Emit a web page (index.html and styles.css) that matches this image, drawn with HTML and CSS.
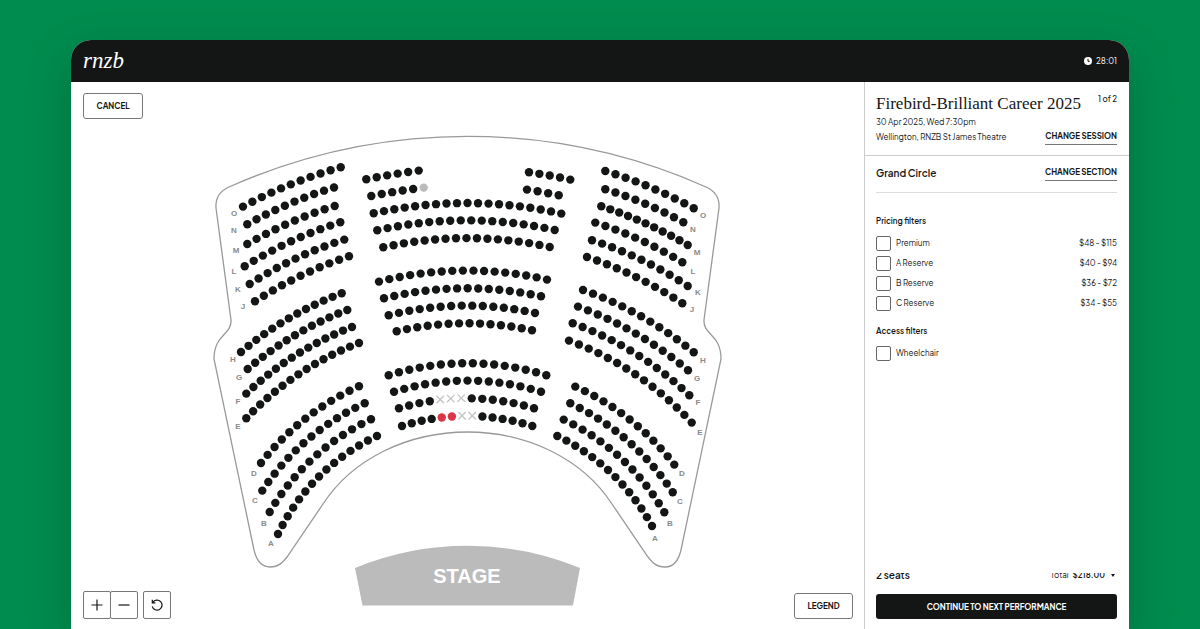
FILE: index.html
```
<!DOCTYPE html>
<html lang="en">
<head>
  <meta charset="utf-8">
  <title>Choose your seats - RNZB</title>
  <link rel="stylesheet" href="styles.css">
</head>
<body>
  <div class="app">
    <header class="topbar">
      <a class="logo" href="#">rnzb</a>
      <div class="timer">
        <svg width="8" height="8" viewBox="0 0 16 16"><circle cx="8" cy="8" r="8" fill="#fff"/><path d="M8 3.5V8.6H11.5" fill="none" stroke="#141615" stroke-width="2"/></svg>
        <span>28:01</span>
      </div>
    </header>
    <div class="content">
      <main class="map">
        <svg class="seating" viewBox="71 82 793 547" role="img" aria-label="Grand Circle seating plan">
          <path class="outline" d="M229 187A587 587 0 0 1 706 187Q720 193 719 208L704 320C703 335 721 334 721 359L681 550Q677 567 665 567C656 567 652 562 648 557L612 504C582 458 526 432 467.5 432S353 458 323 504L287 557C283 562 279 567 270 567Q258 567 254 550L214 359C214 334 232 335 231 320L216 208Q215 193 229 187Z"/>
          <path class="stage" d="M355 568A296 296 0 0 1 580 568L573 605.500H362.500Z"/>
          <text class="stage-name" x="467" y="583">STAGE</text>
          <g id="labels"></g>
          <g id="seats"></g>
        </svg>
        <button class="btn cancel">CANCEL</button>
        <div class="tools">
          <div class="zoom">
            <button aria-label="Zoom in"><svg width="12" height="12" viewBox="0 0 12 12"><path d="M6 .5V11.500M.5 6H11.500"/></svg></button>
            <button aria-label="Zoom out"><svg width="12" height="12" viewBox="0 0 12 12"><path d="M.5 6H11.500"/></svg></button>
          </div>
          <button class="reset" aria-label="Reset view"><svg width="12" height="12" viewBox="0 0 12 12"><path d="M1.800 3.400A5 5 0 1 1 1.200 7.400M1.300 .8V3.900H4.400"/></svg></button>
        </div>
        <button class="btn legend">LEGEND</button>
      </main>
      <aside class="sidebar">
        <section class="event">
          <div class="row top">
            <h1>Firebird-Brilliant Career 2025</h1>
            <span class="step">1 of 2</span>
          </div>
          <div class="row bottom">
            <p>30 Apr 2025, Wed 7:30pm<br>Wellington, RNZB St James Theatre</p>
            <a class="change" href="#">CHANGE SESSION</a>
          </div>
        </section>
        <section class="area">
          <h2>Grand Circle</h2>
          <a class="change" href="#">CHANGE SECTION</a>
        </section>
        <form class="filters">
          <h3>Pricing filters</h3>
          <ul>
            <li><label><input type="checkbox">Premium</label><span>$48 - $115</span></li>
            <li><label><input type="checkbox">A Reserve</label><span>$40 - $94</span></li>
            <li><label><input type="checkbox">B Reserve</label><span>$36 - $72</span></li>
            <li><label><input type="checkbox">C Reserve</label><span>$34 - $55</span></li>
          </ul>
          <h3>Access filters</h3>
          <ul>
            <li><label><input type="checkbox">Wheelchair</label></li>
          </ul>
        </form>
        <footer class="summary">
          <div class="totals">
            <h2>2 seats</h2>
            <button class="total">Total <b>$218.00</b><i class="caret"></i></button>
          </div>
          <button class="continue">CONTINUE TO NEXT PERFORMANCE</button>
        </footer>
      </aside>
    </div>
  </div>
  <script src="seats.js"></script>
</body>
</html>
```
FILE: styles.css
```
* {
  box-sizing: border-box;
}
body {
  margin: 0;
  height: 100vh;
  overflow: hidden;
  padding: 40px 71px 0;
  background: #008c4e;
  color: #141615;
  font-family: "Plus Jakarta Sans", Inter, "Liberation Sans", sans-serif;
  font-size: 8px;
}
button {
  margin: 0;
  padding: 0;
  font: inherit;
  color: inherit;
  background: white;
  border: 1px solid #777;
  cursor: pointer;
}
a {
  color: inherit;
  text-decoration: none;
}
h1, h2, h3, p, ul {
  margin: 0;
  padding: 0;
}
.app {
  height: 100%;
  display: flex;
  flex-direction: column;
  background: white;
  border-radius: 20px 20px 0 0;
  overflow: hidden;
  box-shadow: 0 16px 48px rgba(0, 0, 0, 0.2);
}
.topbar {
  flex: none;
  display: flex;
  align-items: center;
  justify-content: space-between;
  height: 42px;
  padding: 0 12px;
  background: #141615;
  color: white;
}
.logo {
  font-family: "Liberation Serif", serif;
  font-style: italic;
  font-size: 23px;
}
.timer {
  display: flex;
  align-items: center;
  gap: 4px;
  font-size: 8px;
}
.content {
  flex: 1;
  min-height: 0;
  display: flex;
}

/* seating plan */
.map {
  position: relative;
  flex: 1;
  min-width: 0;
}
.seating {
  display: block;
  width: 100%;
  height: 100%;
}
.outline {
  fill: none;
  stroke: #999;
  stroke-width: 1.3;
}
.stage {
  fill: #bbb;
}
.stage-name {
  fill: white;
  font: bold 20px "Liberation Sans", sans-serif;
  text-anchor: middle;
}
.row-name {
  fill: #8a8a8a;
  font: bold 8px "Liberation Sans", sans-serif;
  text-anchor: middle;
}
.seat {
  fill: #141615;
}
.seat.held {
  fill: #bbb;
}
.seat.selected {
  fill: #dc3545;
}
.taken {
  fill: none;
  stroke: #c4c4c4;
  stroke-width: 1.3;
}
.btn {
  position: absolute;
  height: 26px;
  border-radius: 3px;
  font-weight: bold;
}
.cancel {
  top: 11px;
  left: 12px;
  width: 60px;
}
.legend {
  right: 11px;
  bottom: 10px;
  width: 59px;
}
.tools {
  position: absolute;
  left: 12px;
  bottom: 10px;
  display: flex;
  gap: 5px;
}
.zoom {
  display: flex;
}
.tools button {
  display: flex;
  align-items: center;
  justify-content: center;
  width: 28px;
  height: 28px;
  border-radius: 2px;
}
.zoom button + button {
  margin-left: -1px;
}
.tools path {
  fill: none;
  stroke: #141615;
  stroke-width: 1.2;
}

/* booking panel */
.sidebar {
  flex: none;
  display: flex;
  flex-direction: column;
  width: 265px;
  border-left: 1px solid #ccc;
}
.event {
  height: 74px;
  padding: 11px 12px 0 11px;
  border-bottom: 1px solid #ccc;
}
.row {
  display: flex;
  justify-content: space-between;
}
.row.bottom {
  align-items: flex-end;
}
.event h1 {
  font-family: "Liberation Serif", serif;
  font-size: 17px;
  font-weight: normal;
  line-height: 22px;
  white-space: nowrap;
}
.step {
  line-height: 12px;
  font-weight: 500;
}
.event p {
  line-height: 15px;
}
.change {
  flex: none;
  font-weight: bold;
  line-height: 15px;
  border-bottom: 1px solid #777;
}
.area {
  display: flex;
  align-items: center;
  justify-content: space-between;
  height: 37px;
  margin: 0 12px 0 11px;
  padding-bottom: 2px;
  border-bottom: 1px solid #ddd;
}
h2 {
  font-size: 10px;
  font-weight: 600;
}
.filters {
  flex: 1;
  padding: 22px 12px 0 11px;
}
.filters h3 {
  font-size: 8px;
  font-weight: 600;
  line-height: 12px;
  margin-bottom: 6px;
}
.filters ul {
  list-style: none;
  margin-bottom: 12px;
}
.filters li {
  display: flex;
  align-items: center;
  justify-content: space-between;
  height: 20px;
}
.filters label {
  display: flex;
  align-items: center;
  gap: 5px;
}
.filters input {
  appearance: none;
  width: 15px;
  height: 15px;
  margin: 0;
  border: 1px solid #666;
  border-radius: 2px;
}
.summary {
  padding: 0 12px 10px 11px;
}
.totals {
  display: flex;
  align-items: flex-end;
  justify-content: space-between;
  height: 9px;
  margin-bottom: 12px;
  overflow: hidden;
}
.totals h2 {
  line-height: 14px;
}
.total {
  display: flex;
  align-items: center;
  gap: 4px;
  border: 0;
  line-height: 14px;
}
.total b {
  font-weight: 600;
}
.caret {
  margin: 0 2px;
  border: 2px solid transparent;
  border-top: 3px solid #141615;
  border-bottom: 0;
}
.continue {
  display: block;
  width: 100%;
  height: 25px;
  border: 0;
  border-radius: 3px;
  background: #141615;
  color: white;
  font-weight: bold;
}
```
FILE: seats.js
```
const SVG_NS = 'http://www.w3.org/2000/svg';

// each row: x1, y1, x2, y2, bulge of the arc, number of seats, special seats
const rows = [
  // left block, O to A
  [243, 206.3, 340.7, 167, 2.8, 11],
  [247.3, 224, 334, 187.2, 2.5, 10],
  [247.3, 243.7, 334.7, 205.7, 2.6, 10],
  [244.7, 266, 340.3, 222, 3.3, 11],
  [249.7, 283.7, 344.3, 239.3, 3.5, 11],
  [255, 301, 349, 256, 3.3, 11],
  [241, 351.7, 341.7, 293, 5, 13],
  [247.7, 368.7, 347.3, 309.7, 5, 13],
  [246.3, 393.3, 352, 326.7, 6.2, 14],
  [246.3, 418, 359, 342.7, 7.6, 15],
  [261, 462.7, 359, 386, 7.6, 13],
  [262.3, 490.3, 364.7, 403, 9.4, 14],
  [269.7, 511.7, 371, 419, 10.4, 14],
  [278, 533.7, 377, 435.7, 12, 15],
  // centre block
  [366.3, 179, 418.7, 170.3, 0.5, 6],
  [529, 172, 570.3, 179.3, 0.4, 5],
  [371.3, 195.7, 423.7, 187.3, 0.5, 6, { 5: 'held' }],
  [527, 189.3, 558.7, 195, 0.2, 4],
  [373.7, 213, 561.3, 213.3, 10.4, 19],
  [377.3, 230, 554.7, 229.7, 9.8, 18],
  [383.3, 247, 549.7, 246.7, 9, 17],
  [379, 281.3, 547, 279.3, 10, 17],
  [384, 298, 541, 296, 9, 16],
  [388.7, 315, 535, 312.7, 8.5, 15],
  [396.7, 331, 532, 330, 7.5, 14],
  [388.7, 375, 546.3, 375, 12.1, 16],
  [394, 391.5, 541, 391.5, 11.2, 15],
  [399, 408, 534, 408, 10, 14, { 4: 'taken', 5: 'taken', 6: 'taken' }],
  [402, 425.7, 532.3, 425.7, 10, 14, { 4: 'selected', 5: 'selected', 6: 'taken', 7: 'taken' }],
  // right block, O to A
  [605.3, 170.7, 693.7, 208, 2.5, 10],
  [605.3, 189, 683.3, 222, 2.3, 9],
  [601.3, 206, 687.7, 244.7, 2.5, 11],
  [595.3, 222.3, 682.3, 262, 2.9, 10],
  [592, 240, 687.7, 285.7, 3.7, 11],
  [587, 256.7, 682.3, 303, 3.4, 11],
  [583, 289.7, 693.7, 352, 5.6, 13],
  [578, 306.3, 688, 370, 5.6, 13],
  [572.7, 323, 689.3, 395, 7.2, 14],
  [569, 340.3, 691.7, 422.3, 8.8, 15],
  [575.3, 386.3, 674.3, 464.3, 7.8, 13],
  [570.3, 403, 672.7, 492, 9.4, 14],
  [563.7, 419.3, 664.3, 512, 10.4, 14],
  [557.3, 435.7, 652, 525.7, 10.3, 14]
];

const names = 'ONMLKJHGFEDCBA';
const leftNames = [[234, 213], [234, 230], [236, 250], [234, 271], [238, 289], [243, 306], [233, 359], [239, 377], [238, 401], [238, 426], [254, 473], [255, 500], [264, 523], [271, 543]];
const rightNames = [[703, 215], [693, 229], [697, 252], [693, 271], [698, 292], [692, 309], [703, 360], [697, 378], [698, 402], [700, 432], [682, 473], [680, 501], [670, 523], [655, 538]];

function add(parent, tag, attrs) {
  const el = document.createElementNS(SVG_NS, tag);
  for (const key in attrs) el.setAttribute(key, attrs[key]);
  parent.appendChild(el);
  return el;
}

const seats = document.getElementById('seats');
rows.forEach(([x1, y1, x2, y2, bulge, count, special = {}]) => {
  const chord = Math.hypot(x2 - x1, y2 - y1);
  const radius = (chord * chord / 4 + bulge * bulge) / (2 * bulge);
  const half = Math.asin(chord / 2 / radius);
  const tilt = Math.atan2(y2 - y1, x2 - x1);
  const cx = (x1 + x2) / 2 - Math.sin(tilt) * (radius - bulge);
  const cy = (y1 + y2) / 2 + Math.cos(tilt) * (radius - bulge);
  for (let i = 0; i < count; i++) {
    const angle = tilt - half + 2 * half * i / (count - 1);
    const x = cx + Math.sin(angle) * radius;
    const y = cy - Math.cos(angle) * radius;
    if (special[i] === 'taken') {
      add(seats, 'path', { class: 'taken', d: `M${x - 3.7} ${y - 3.7}l7.4 7.4m0 -7.4l-7.4 7.4` });
    } else {
      add(seats, 'circle', { class: 'seat ' + (special[i] || ''), cx: x, cy: y + 0.3, r: 4.2 });
    }
  }
});

const labels = document.getElementById('labels');
[leftNames, rightNames].forEach(side => {
  side.forEach(([x, y], i) => {
    add(labels, 'text', { class: 'row-name', x: x, y: y + 3 }).textContent = names[i];
  });
});
```
